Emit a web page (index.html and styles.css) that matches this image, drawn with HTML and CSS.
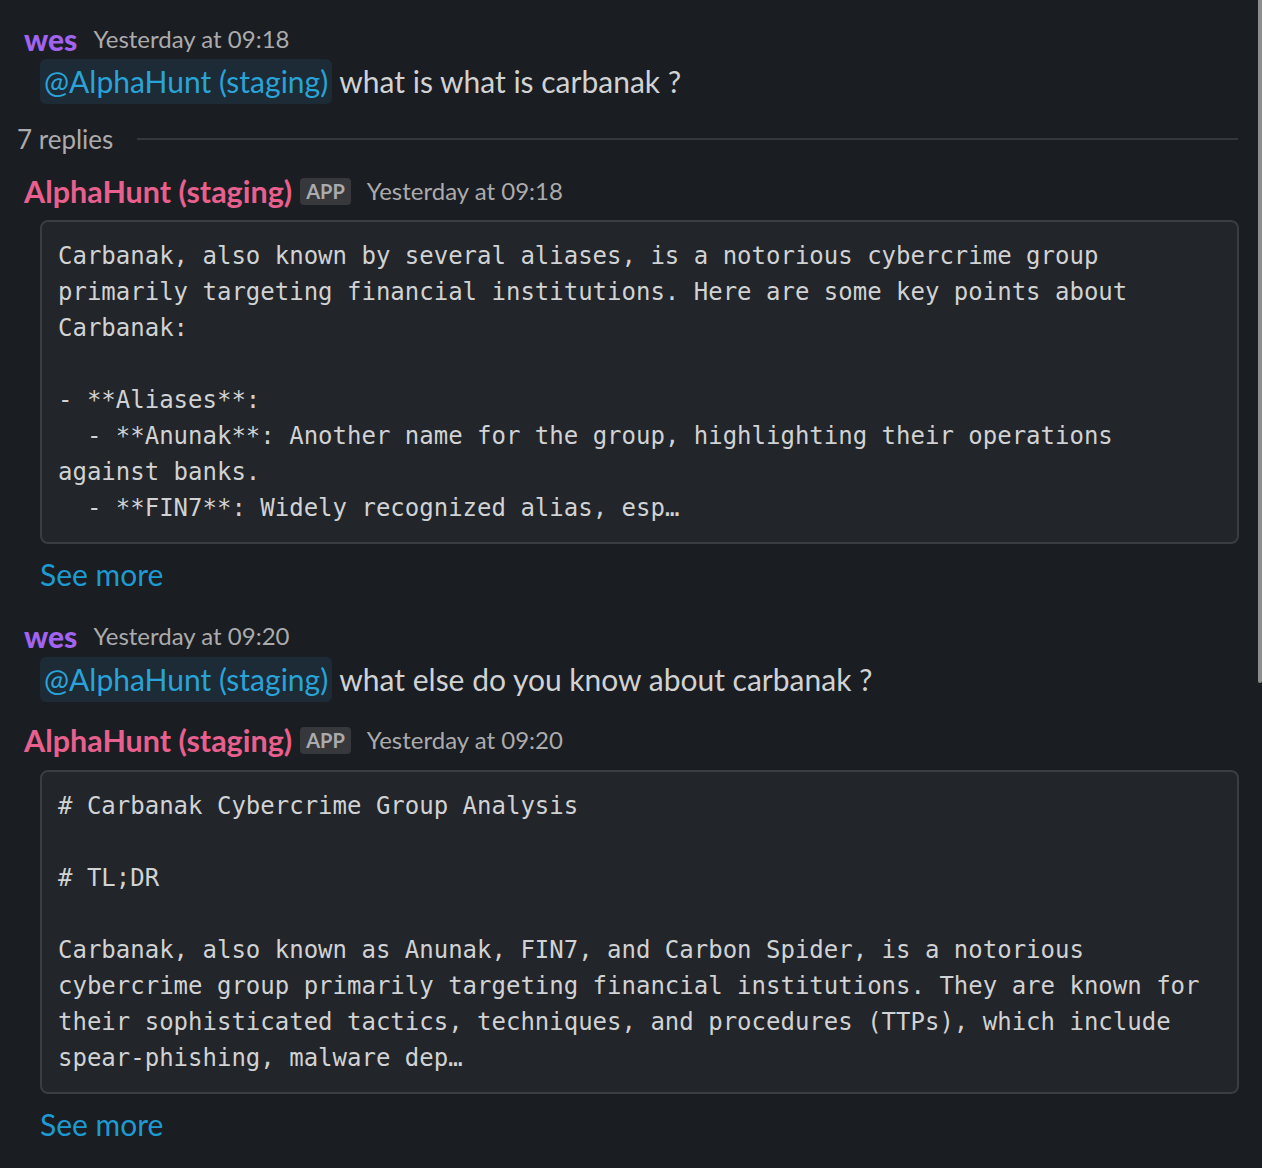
FILE: index.html
```html
<!DOCTYPE html>
<html lang="en">
<head>
<meta charset="utf-8">
<title>Thread</title>
<link rel="stylesheet" href="styles.css">
</head>
<body>
<div class="thread">
  <div class="msg msg-first">
    <div class="msg-header"><span class="name name-user">wes</span><span class="ts">Yesterday at 09:18</span></div>
    <div class="msg-body"><span class="mention">@AlphaHunt (staging)</span> what is what is carbanak ?</div>
  </div>

  <div class="replies"><span class="replies-count">7 replies</span><span class="replies-rule"></span></div>

  <div class="msg msg-bot">
    <div class="msg-header"><span class="name name-bot">AlphaHunt (staging)</span><span class="badge">APP</span><span class="ts">Yesterday at 09:18</span></div>
    <pre class="code">Carbanak, also known by several aliases, is a notorious cybercrime group primarily targeting financial institutions. Here are some key points about Carbanak:

- **Aliases**:
  - **Anunak**: Another name for the group, highlighting their operations against banks.
  - **FIN7**: Widely recognized alias, esp…</pre>
    <div class="see-more">See more</div>
  </div>

  <div class="msg msg-second">
    <div class="msg-header"><span class="name name-user">wes</span><span class="ts">Yesterday at 09:20</span></div>
    <div class="msg-body"><span class="mention">@AlphaHunt (staging)</span> what else do you know about carbanak ?</div>
  </div>

  <div class="msg msg-bot msg-bot-second">
    <div class="msg-header"><span class="name name-bot">AlphaHunt (staging)</span><span class="badge">APP</span><span class="ts">Yesterday at 09:20</span></div>
    <pre class="code"># Carbanak Cybercrime Group Analysis

# TL;DR

Carbanak, also known as Anunak, FIN7, and Carbon Spider, is a notorious cybercrime group primarily targeting financial institutions. They are known for their sophisticated tactics, techniques, and procedures (TTPs), which include spear-phishing, malware dep…</pre>
    <div class="see-more">See more</div>
  </div>
</div>
<div class="scrollbar"></div>
</body>
</html>
```

FILE: styles.css
```css
html, body {
  margin: 0;
  padding: 0;
  background: #1a1d21;
}

body {
  font-family: Lato, "Noto Sans", sans-serif;
  color: #d1d2d3;
  width: 1262px;
  height: 1168px;
  overflow: hidden;
  position: relative;
}

.thread {
  display: flex;
  flex-direction: column;
}

.msg-header {
  display: flex;
  align-items: center;
  height: 44px;
  padding-left: 24px;
}

.msg-first .msg-header {
  margin-top: 18px;
  height: 41px;
}

.msg-second .msg-header {
  margin-top: 18px;
  height: 43px;
}

.msg-bot .msg-header {
  margin-top: 12px;
}

.msg-bot-second .msg-header {
  margin-top: 16px;
}

.name {
  font-size: 30px;
  line-height: 44px;
}

.name-user {
  color: #a163f0;
  font-weight: 900;
  margin-right: 16px;
}

.name-bot {
  color: #e8608e;
  font-weight: 700;
  font-size: 30.5px;
  margin-right: 8px;
}

.badge {
  display: inline-block;
  background: #36383c;
  color: #ababad;
  font-size: 20px;
  font-weight: 700;
  line-height: 27px;
  height: 27px;
  padding: 0 6px;
  border-radius: 4px;
  margin-right: 16px;
}

.ts {
  font-size: 24px;
  color: #ababad;
  line-height: 44px;
}

.msg-body {
  padding-left: 40px;
  font-size: 30px;
  line-height: 45px;
  height: 45px;
  color: #d1d2d3;
}

.mention {
  display: inline-block;
  background: #1c2b35;
  color: #2aa3d8;
  padding: 0 4px;
  border-radius: 6px;
  line-height: 45px;
}

.replies {
  display: flex;
  align-items: center;
  gap: 24px;
  margin-top: 17px;
  height: 36px;
  padding-left: 17px;
  padding-right: 24px;
}

.replies-count {
  font-size: 26px;
  color: #ababad;
}

.replies-rule {
  flex: 1;
  height: 2px;
  background: #35373b;
}

.code {
  margin: 7px 23px 0 40px;
  padding: 16px;
  background: #222529;
  border: 2px solid #3b3d41;
  border-radius: 8px;
  font-family: "DejaVu Sans Mono", "Liberation Mono", monospace;
  font-size: 24px;
  line-height: 36px;
  color: #d1d2d3;
  white-space: pre-wrap;
  word-wrap: break-word;
}

.msg-bot-second .code {
  margin-top: 8px;
}

.see-more {
  margin-top: 8px;
  padding-left: 40px;
  font-size: 30px;
  line-height: 44px;
  color: #1d9bd1;
}

.scrollbar {
  position: absolute;
  top: 0;
  right: 0;
  width: 4px;
  height: 683px;
  background: #8d8d8d;
  border-radius: 0 0 3px 3px;
}
```
